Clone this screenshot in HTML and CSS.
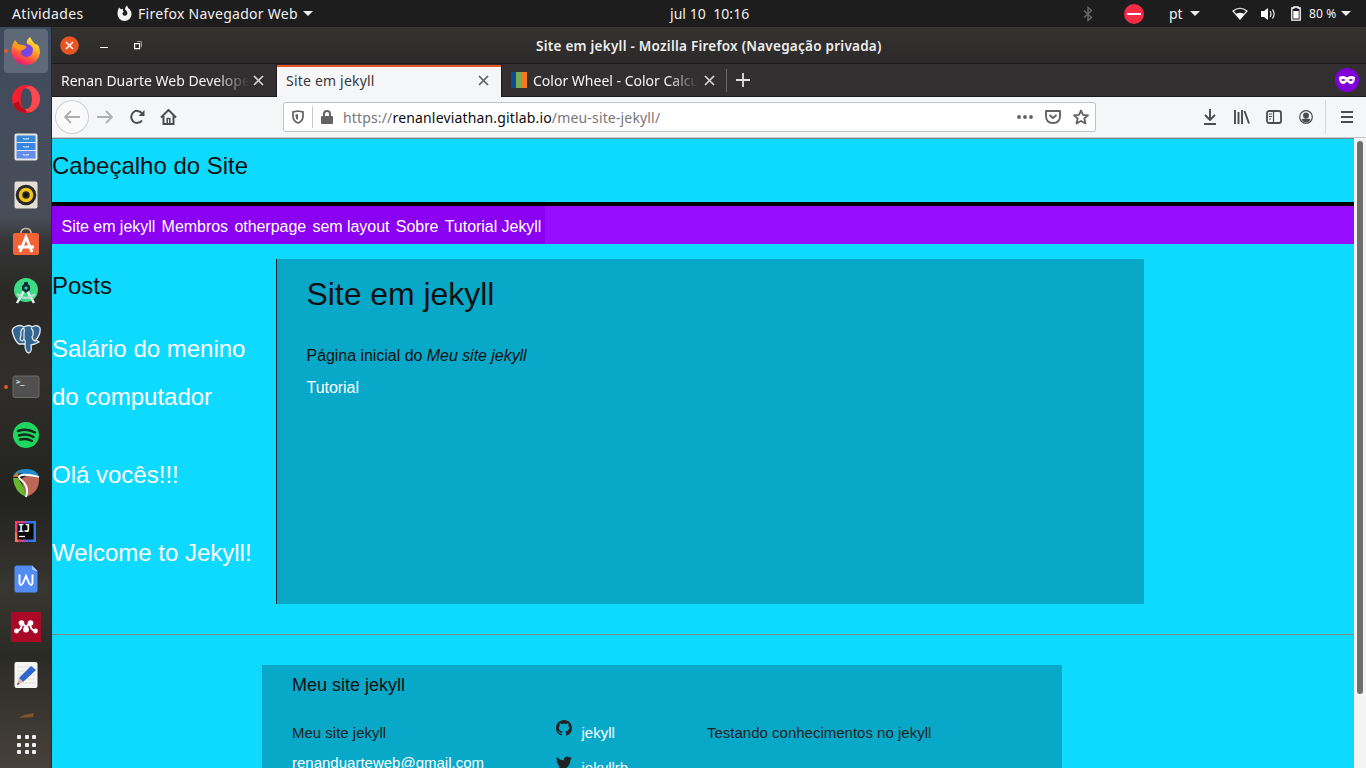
FILE: index.html
```html
<!DOCTYPE html>
<html lang="pt">
<head>
<meta charset="utf-8">
<title>Site em jekyll</title>
<link rel="stylesheet" href="styles.css">
</head>
<body>
<div class="desktop">
  <header class="topbar">
    <span class="activities">Atividades</span>
    <svg class="app-icon" width="17" height="17" viewBox="0 0 17 17"><path d="M8.500 16A7 7 0 0 1 1.500 8.600C1.500 6.200 2.400 4 3 2.600L5 4.200 7 4Q6.500 6 7.800 6.700L6.300 8.200Q6.800 11 9 10.800 11.600 10.500 11.300 7.600 10.700 5.700 9 4.600 9 2 11 .6 11.500 2.800 14 4.500 15.900 7 15.500 9.700A7 7 0 0 1 8.500 16Z" fill="#f2f2f2"/></svg>
    <span class="app-name">Firefox Navegador Web</span>
    <i class="caret"></i>
    <span class="clock">jul 10&nbsp; 10:16</span>
    <div class="status">
      <svg width="10" height="16" viewBox="0 0 10 16"><path d="M1 4.500L8.500 11.500 5 14.500V1.500L8.500 4.500 1 11.500" fill="none" stroke="#686868" stroke-width="1.400"/></svg>
      <svg class="dnd" width="20" height="20" viewBox="0 0 20 20"><circle cx="10" cy="10" r="10" fill="#f32b45"/><path d="M3 10H17" stroke="#fff" stroke-width="2"/></svg>
      <span class="lang">pt</span><i class="caret"></i>
      <svg class="wifi" width="16" height="14" viewBox="0 0 16 14"><path d="M1 4Q8-1.500 15 4L8 12Z" fill="none" stroke="#eee" stroke-width="1.200"/><path d="M4 7Q8 4.500 12 7L8 12Z" fill="#fff"/></svg>
      <svg class="volume" width="16" height="14" viewBox="0 0 16 14"><path d="M1 4H4L8 1V13L4 10H1Z" fill="#fff"/><path d="M10 4Q12 7 10 10M12.500 2.500Q15.800 7 12.500 11.500" fill="none" stroke="#ddd" stroke-width="1.300"/></svg>
      <svg class="battery" width="10" height="15" viewBox="0 0 10 15"><path d="M3 1H7V2H9.200V14.200H.8V2H3Z" fill="none" stroke="#fff" stroke-width="1.300"/><path d="M2.300 5H7.700V12.500H2.300Z" fill="#fff"/></svg>
      <span class="percent">80 %</span><i class="caret"></i>
    </div>
  </header>
  <div class="workspace">
    <nav class="dock">
      <div class="launcher running"><div class="selected"><svg width="30" height="30" viewBox="0 0 30 30"><defs><linearGradient id="fire" x1=".8" y1="0" x2=".3" y2="1"><stop stop-color="#fff44f"/><stop offset=".4" stop-color="#ffab22"/><stop offset=".75" stop-color="#ff4a45"/><stop offset="1" stop-color="#e31587"/></linearGradient></defs><circle cx="15" cy="16" r="8" fill="#7745df"/><path d="M19 1Q15 4 16 8 21 9 22 13 22 21 15 21 9 20 10 15L15 12Q12 12 11 9L7 8 4 4Q-1 12 1 19 5 29 15 29 27 28 29 17 29 8 24 8 21 5 19 1Z" fill="url(#fire)"/><path d="M3 5L8 9H13L16 11 11 14Q6 14 3 11Z" fill="#ff9b18"/></svg></div></div>
      <div class="launcher"><svg width="30" height="30" viewBox="0 0 30 30"><path fill-rule="evenodd" d="M15 1A14 14 0 1 0 15 29A14 14 0 1 0 15 1ZM15 4C23 4 23 26 15 26C8 26 8 4 15 4Z" fill="#f3202f"/><path d="M21 2.300Q29 7 29 15T21 27.700Q17 29 13 25 21 26 21 15 21 4 14 4 18 1 21 2.300Z" fill="#fb4a4f"/><path d="M15 26Q9 25 8 17L2 20Q6 29 15 29Z" fill="#b90c1d"/></svg></div>
      <div class="launcher"><svg width="24" height="28" viewBox="0 0 24 28"><rect x=".5" y=".5" width="23" height="27" rx="2" fill="#e8e6e1"/><path d="M2.500 2.500H21.500V9H2.500Z" fill="#3688db"/><path d="M2.500 10H21.500V17H2.500Z" fill="#3984e5"/><path d="M2.500 18H21.500V25.500H2.500Z" fill="#638deb"/><path d="M9.500 5V6H14.500V5M9.500 13V14H14.500V13M9.500 21V22H14.500V21" fill="none" stroke="#eaf3ff"/></svg></div>
      <div class="launcher"><svg width="24" height="28" viewBox="0 0 24 28"><rect x=".5" y=".5" width="23" height="27" rx="2" fill="#e3dfd4"/><circle cx="12" cy="14" r="10.300" fill="#282828"/><circle cx="12" cy="14" r="5.500" fill="none" stroke="#f5c21b" stroke-width="3.500"/><circle cx="12" cy="14" r="2" fill="#111"/></svg></div>
      <div class="launcher store"><svg width="28" height="29" viewBox="0 0 28 29"><path d="M9 7V5Q10 1.500 14 1.500T19 5V7" fill="none" stroke="#c9b69c" stroke-width="1.600"/><rect x="1" y="6" width="26" height="22" rx="2" fill="#f26336"/><path d="M8 25L14 10 20 25M6 20H22" fill="none" stroke="#fff" stroke-width="2.800"/></svg></div>
      <div class="launcher"><svg width="28" height="30" viewBox="0 0 28 30"><circle cx="14" cy="14" r="12" fill="#3ddc84"/><path d="M5 27L13 13 14 13 22 27" fill="none" stroke="#e4f1ef" stroke-width="2.500"/><path d="M5 18Q14 26 23 18" fill="none" stroke="#bfdbd7" stroke-width="2"/><path d="M12 6H16V8L18 10V14L14 17 10 14V10L12 8Z" fill="#073042"/><circle cx="14" cy="12" r="1.600" fill="#3ddc84"/></svg></div>
      <div class="launcher"><svg width="30" height="30" viewBox="0 0 30 30"><path d="M4 3Q9 0 13 3 18 0 21 3 27 0 29 4 30 10 25 16L28 18 24 20 20 21Q21 28 18 29 14 29 14 20L8 20Q4 17 2 10 0 5 4 3Z" fill="#336791" stroke="#e9edf1" stroke-width="1.300"/><path d="M12 4Q9 7 10 11L9 15Q11 19 13 15V9Q14 4 12 4M20 4Q24 8 21 13 22 17 25 17M14 20Q15 15 12 16" fill="none" stroke="#e9edf1" stroke-width="1.200"/></svg></div>
      <div class="launcher running"><svg width="28" height="24" viewBox="0 0 28 24"><rect x="1" y="1" width="26" height="21.500" rx="2" fill="#505050" stroke="#6b6b6b"/><text class="prompt" x="4" y="9">&gt;_</text></svg></div>
      <div class="launcher"><svg width="28" height="28" viewBox="0 0 28 28"><circle cx="14" cy="14" r="13" fill="#1ed760"/><path d="M6 10Q15 6.800 23 11.500M7 14.500Q15 12 21.500 16M8 18.500Q15 17 20 20" fill="none" stroke="#15291c" stroke-width="2.400" stroke-linecap="round"/></svg></div>
      <div class="launcher"><svg width="28" height="30" viewBox="0 0 28 30"><path d="M1 9Q3 1 14 1T27 9L18 8 8 5Z" fill="#218dcc"/><path d="M1 10L6 10 15 25 14 29Q2 24 1 10Z" fill="#63b92f"/><path d="M9 11L16 7 27 10Q28 24 14 29Z" fill="#bd6757"/><path d="M1 9L5 4 7 9Z" fill="#c27b32"/><path d="M14 29Q18 18 8 11 5 8 10 7T27 9" fill="none" stroke="#fff" stroke-width="1.800"/></svg></div>
      <div class="launcher"><svg width="23" height="23" viewBox="0 0 23 23"><defs><linearGradient id="idea" x2="1"><stop stop-color="#ff3b59"/><stop offset=".35" stop-color="#c74589"/><stop offset=".65" stop-color="#366cf0"/><stop offset="1" stop-color="#327fe0"/></linearGradient></defs><path d="M1 1H22V22H1Z" fill="url(#idea)"/><path d="M1 11L4 15V22H1Z" fill="#ef7952"/><path d="M3.500 3.500H19.500V19.500H3.500Z" fill="#080808"/><text class="idea-label" x="4" y="12">IJ</text><path d="M5 16.500H11" stroke="#fff" stroke-width="1.300"/></svg></div>
      <div class="launcher"><svg width="24" height="28" viewBox="0 0 24 28"><path d="M2 .5H18L23.500 6V26Q23 27.500 21 27.500H2Q.5 27 .5 25V2Z" fill="#528bf2"/><path d="M18 .5V4Q19 6 23.500 6Z" fill="#a9c4f8"/><path d="M5.500 9.500V18Q6.500 22 9 18L12 11 15 18Q17.500 22 18.500 18V9.500" fill="none" stroke="#fff" stroke-width="1.900"/></svg></div>
      <div class="launcher"><svg width="30" height="30" viewBox="0 0 30 30"><path d="M0 0H30V30H0Z" fill="#a90827"/><path d="M5.500 19Q11 18 11 11L15 15 19 11Q19 18 24.500 19" fill="none" stroke="#fff" stroke-width="2"/><g fill="#fff"><circle cx="10.500" cy="11" r="2.800"/><circle cx="19.500" cy="11" r="2.800"/><circle cx="5.500" cy="19" r="2.400"/><circle cx="15" cy="17.500" r="3"/><circle cx="24.500" cy="19" r="2.400"/></g></svg></div>
      <div class="launcher"><svg width="24" height="28" viewBox="0 0 24 28"><rect x=".5" y="1" width="23" height="26" rx="2" fill="#f5f5f2"/><path d="M3 6H21M3 10H21M3 14H21M3 18H21M3 22H21" stroke="#dedede"/><path d="M17 5L22 9 9 21 5 17Z" fill="#2e65cf"/><path d="M5 17L9 21 3 24Z" fill="#deb59e"/><path d="M3 24L4 21.500 5.500 23Z" fill="#333"/></svg></div>
      <svg class="leaf" width="18" height="6" viewBox="0 0 18 6"><path d="M1 5L6 2 16 0 15 4Z" fill="#805626"/></svg>
      <div class="show-apps"><i></i><i></i><i></i><i></i><i></i><i></i><i></i><i></i><i></i></div>
    </nav>
    <main class="browser">
      <div class="titlebar">
        <div class="window-buttons"><svg width="19" height="19" viewBox="0 0 19 19"><circle cx="9.500" cy="9.500" r="9.300" fill="#e95420"/><path d="M6 6L13 13M13 6L6 13" stroke="#fff" stroke-width="1.500"/></svg><i class="minimize"></i><svg width="9" height="9" viewBox="0 0 9 9"><path d="M.6 2.600H5.600V7.600H.6Z" fill="none" stroke="#fff" stroke-width="1.200"/><path d="M3 .5H7.500V6" fill="none" stroke="#999"/></svg></div>
        <span class="window-title">Site em jekyll - Mozilla Firefox (Navegação privada)</span>
      </div>
      <div class="tabs">
        <div class="tab"><span class="tab-label fade first">Renan Duarte Web Developer</span><svg class="close" width="11" height="11" viewBox="0 0 11 11"><path d="M1 1L10 10M10 1L1 10" stroke="currentColor" stroke-width="1.700"/></svg></div>
        <div class="tab active"><span class="tab-label">Site em jekyll</span><svg class="close" width="11" height="11" viewBox="0 0 11 11"><path d="M1 1L10 10M10 1L1 10" stroke="currentColor" stroke-width="1.700"/></svg></div>
        <div class="tab last"><svg class="favicon" width="16" height="16" viewBox="0 0 16 16"><path d="M0 0H5V16H0Z" fill="#0a4b91"/><path d="M5 0H11V16H5Z" fill="#77ad52"/><path d="M11 0H16V16H11Z" fill="#f17b21"/></svg><span class="tab-label fade third">Color Wheel - Color Calculator</span><svg class="close" width="11" height="11" viewBox="0 0 11 11"><path d="M1 1L10 10M10 1L1 10" stroke="currentColor" stroke-width="1.700"/></svg></div>
        <svg class="new-tab" width="14" height="14" viewBox="0 0 14 14"><path d="M0 7H14M7 0V14" stroke="#e2e2e2" stroke-width="1.800"/></svg>
        <svg class="private" width="24" height="24" viewBox="0 0 24 24"><circle cx="12" cy="12" r="12" fill="#8000d7"/><path fill-rule="evenodd" d="M4 9Q8 7 12 9.500 16 7 20 9 20 16 16 16 14 16 12 13.500 10 16 8 16 4 16 4 9ZM6 12Q8 14 10.500 12 8 10 6 12ZM13.500 12Q16 14 18 12 16 10 13.500 12Z" fill="#fff"/></svg>
      </div>
      <div class="toolbar">
        <span class="back"><svg width="16" height="14" viewBox="0 0 16 14"><path d="M16 7H1M7 1L1 7L7 13" fill="none" stroke="#b0b0b3" stroke-width="1.800"/></svg></span>
        <svg class="forward" width="16" height="14" viewBox="0 0 16 14"><path d="M0 7H15M9 1L15 7L9 13" fill="none" stroke="#b0b0b3" stroke-width="1.800"/></svg>
        <svg class="reload" width="16" height="16" viewBox="0 0 16 16"><path d="M12.800 4A6 6 0 1 0 13 11.500" fill="none" stroke="#4c4c4f" stroke-width="2"/><path d="M15.500 1V7H9.500Z" fill="#4c4c4f"/></svg>
        <svg class="home" width="17" height="16" viewBox="0 0 17 16"><path d="M1 8.500L8.500 1 16 8.500M3.500 7V15H13.500V7" fill="none" stroke="#4c4c4f" stroke-width="2"/><path d="M7.200 15V9.500H9.800V15" fill="none" stroke="#4c4c4f" stroke-width="1.500"/></svg>
        <div class="address">
          <svg width="12" height="14" viewBox="0 0 12 14"><path d="M6 1L11 2V6Q11 11 6 13 1 11 1 6V2Z" fill="none" stroke="#626265" stroke-width="1.700"/><path d="M6 4V10Q3.500 9 3.500 6V4.500Z" fill="#626265"/></svg>
          <i class="address-divider"></i>
          <svg width="12" height="14" viewBox="0 0 12 14"><path d="M3 7V4Q3 1 6 1T9 4V7" fill="none" stroke="#626265" stroke-width="2"/><rect y="6" width="12" height="8" rx="1" fill="#626265"/></svg>
          <span class="url">https://<b>renanleviathan.gitlab.io</b>/meu-site-jekyll/</span>
          <svg class="more" width="16" height="4" viewBox="0 0 16 4"><g fill="#626265"><circle cx="2" cy="2" r="1.900"/><circle cx="8" cy="2" r="1.900"/><circle cx="14" cy="2" r="1.900"/></g></svg>
          <svg class="pocket" width="16" height="14" viewBox="0 0 16 14"><path d="M1 1H15V6Q15 13 8 13T1 6Z" fill="none" stroke="#626265" stroke-width="1.900" stroke-linejoin="round"/><path d="M4.500 5L8 8 11.500 5" fill="none" stroke="#626265" stroke-width="1.900"/></svg>
          <svg class="star" width="16" height="16" viewBox="0 0 16 16"><path d="M8 1.500L10 5.800 15 6.300 11.300 9.500 12.500 14.500 8 12 3.500 14.500 4.700 9.500 1 6.300 6 5.800Z" fill="none" stroke="#626265" stroke-width="1.800" stroke-linejoin="round"/></svg>
        </div>
        <div class="tools">
          <svg width="14" height="16" viewBox="0 0 14 16"><path d="M7 0V11M2 6L7 11L12 6M1 15H13" fill="none" stroke="#4c4c4f" stroke-width="1.900"/></svg>
          <svg width="16" height="14" viewBox="0 0 16 14"><path d="M1 0V14M4.500 2V14M8 0V14M10.500 1L15 13.500" stroke="#4c4c4f" stroke-width="1.900"/></svg>
          <svg width="16" height="14" viewBox="0 0 16 14"><rect x="1" y="1" width="14" height="12" rx="2" fill="none" stroke="#4c4c4f" stroke-width="1.800"/><path d="M7.500 1V13M3 4H6M3 6.500H6M3 9H5" stroke="#4c4c4f" stroke-width="1.200"/></svg>
          <svg width="14" height="14" viewBox="0 0 14 14"><circle cx="7" cy="7" r="6.300" fill="none" stroke="#4c4c4f" stroke-width="1.200"/><circle cx="7" cy="5.500" r="3" fill="#4c4c4f"/><path d="M2.500 9Q7 8 11.500 9 10 12.500 7 12.500T2.500 9Z" fill="#4c4c4f"/></svg>
        </div>
        <span class="menu"><svg width="12" height="12" viewBox="0 0 12 12"><path d="M0 1H12M0 6H12M0 11H12" stroke="#4c4c4f" stroke-width="1.800"/></svg></span>
      </div>
      <div class="viewport">
        <div class="page">
          <header class="site-header">Cabeçalho do Site</header>
          <nav class="site-nav"><div class="links"><a>Site em jekyll</a><a>Membros</a><a>otherpage</a><a>sem layout</a><a>Sobre</a><a>Tutorial Jekyll</a></div></nav>
          <div class="columns">
            <aside class="posts"><h2>Posts</h2><a>Salário do menino<br>do computador</a><a>Olá vocês!!!</a><a>Welcome to Jekyll!</a></aside>
            <article class="article"><h1>Site em jekyll</h1><p>Página inicial do <em>Meu site jekyll</em></p><p><a>Tutorial</a></p></article>
          </div>
          <footer class="site-footer"><div class="footer-box"><h3>Meu site jekyll</h3><div class="footer-columns">
            <div class="contact">Meu site jekyll<br><a>renanduarteweb@gmail.com</a></div>
            <div class="social">
              <div><svg width="16" height="16" viewBox="0 0 16 16"><path fill="#222" d="M8 0C3.580 0 0 3.580 0 8c0 3.540 2.290 6.530 5.470 7.590.4.07.55-.17.55-.38 0-.19-.01-.82-.01-1.490-2.010.37-2.530-.49-2.690-.94-.09-.23-.48-.94-.82-1.130-.28-.15-.68-.52-.01-.53.63-.01 1.080.58 1.230.82.72 1.210 1.870.87 2.330.66.07-.52.28-.87.51-1.070-1.780-.2-3.640-.89-3.640-3.950 0-.87.31-1.590.82-2.150-.08-.2-.36-1.020.08-2.120 0 0 .67-.21 2.200.82.64-.18 1.320-.27 2-.27s1.360.09 2 .27c1.530-1.040 2.200-.82 2.200-.82.44 1.100.16 1.920.08 2.120.51.56.82 1.270.82 2.150 0 3.070-1.870 3.750-3.650 3.950.29.25.54.73.54 1.480 0 1.070-.01 1.930-.01 2.200 0 .21.15.46.55.38A8.010 8.010 0 0 0 16 8c0-4.420-3.580-8-8-8z"/></svg><a>jekyll</a></div>
              <div><svg width="16" height="16" viewBox="0 0 24 24"><path fill="#222" d="M23.953 4.570a10 10 0 0 1-2.825.775 4.958 4.958 0 0 0 2.163-2.723c-.951.555-2.005.959-3.127 1.184a4.920 4.920 0 0 0-8.384 4.482C7.690 8.095 4.067 6.130 1.640 3.162a4.822 4.822 0 0 0-.666 2.475c0 1.710.87 3.213 2.188 4.096a4.904 4.904 0 0 1-2.228-.616v.06a4.923 4.923 0 0 0 3.946 4.827 4.996 4.996 0 0 1-2.212.085 4.936 4.936 0 0 0 4.604 3.417 9.867 9.867 0 0 1-6.102 2.105c-.39 0-.779-.023-1.170-.067a13.995 13.995 0 0 0 7.557 2.209c9.053 0 13.998-7.496 13.998-13.985 0-.21 0-.42-.015-.63A9.935 9.935 0 0 0 24 4.590z"/></svg><a>jekyllrb</a></div>
            </div>
            <div class="about">Testando conhecimentos no jekyll</div>
          </div></div></footer>
        </div>
        <div class="scrollbar"><i></i></div>
      </div>
    </main>
  </div>
</div>
</body>
</html>
```
FILE: styles.css
```css
* { box-sizing: border-box; }
body { margin: 0; overflow: hidden; font: 14px "Noto Sans", sans-serif; }
svg { display: block; flex: none; }
i { display: block; flex: none; }
h1, h2, h3, p { margin: 0; font-weight: 400; }
.desktop { width: 1366px; height: 768px; overflow: hidden; display: flex; flex-direction: column; }

.topbar { height: 27px; flex: none; background: #1d1d1d; color: #f0f0f0; display: flex; align-items: center; padding: 0 15px 0 12px; white-space: nowrap; }
.activities { width: 72px; letter-spacing: .35px; }
.app-icon { margin: 0 5px 0 32px; }
.app-name { width: 160px; letter-spacing: .28px; }
.caret { border: 5px solid transparent; border-top-color: #eee; border-bottom: 0; margin-left: 5px; }
.clock { margin-left: 357px; width: 80px; letter-spacing: .05px; }
.status { margin-left: auto; display: flex; align-items: center; }
.dnd { margin-left: 31px; }
.lang { margin-left: 25px; width: 16px; }
.wifi { margin-left: 32px; }
.volume { margin-left: 12px; }
.battery { margin-left: 15px; }
.percent { margin-left: 8px; width: 27px; font-size: 12px; letter-spacing: .15px; }

.workspace { display: flex; height: 741px; }
.dock { width: 52px; flex: none; border-right: 1px solid #292a2c; background: linear-gradient(#3d4a5d 0, #444c5b 100px, #494d58 190px, #343536 215px, #292824 270px, #302f2b 350px, #22221f 470px, #373631 560px, #2b2b25 630px, #47413b 741px); }
.launcher { height: 48px; display: flex; align-items: center; justify-content: center; position: relative; }
.store { padding-bottom: 3px; }
.running::before { content: ""; position: absolute; left: 4px; top: 22px; width: 4px; height: 4px; border-radius: 50%; background: #e95420; }
.selected { width: 44px; height: 44px; border-radius: 4px; background: #ffffff2b; display: flex; align-items: center; justify-content: center; margin-left: 1px; }
.prompt { font: bold 7px "DejaVu Sans Mono", monospace; fill: #eee; }
.idea-label { font: bold 10px "DejaVu Sans Mono", monospace; fill: #fff; }
.leaf { margin: 14px 0 0 18px; }
.show-apps { width: 19px; margin: 16px 0 0 17px; display: grid; grid-template-columns: repeat(3, 4px); gap: 3.500px; }
.show-apps i { width: 4px; height: 4px; border-radius: 1px; background: #eee; }

.browser { width: 1314px; display: flex; flex-direction: column; }
.titlebar { height: 37px; flex: none; background: linear-gradient(#343330, #2c292a); border-bottom: 1px solid #1d1c1d; display: flex; align-items: center; color: #eee; }
.window-buttons { display: flex; align-items: center; padding-left: 8px; width: 484px; }
.minimize { width: 8px; height: 1px; background: #fff; margin: 5px 26px 0 21px; }
.window-title { font-weight: 600; font-size: 13.500px; white-space: nowrap; letter-spacing: .25px; padding-top: 1px; }

.tabs { height: 33px; flex: none; background: #332f31; border-bottom: 1px solid #1b1a1b; display: flex; align-items: center; color: #f4f4f4; padding-right: 7px; }
.tab { width: 225px; height: 33px; display: flex; align-items: center; padding: 0 12px 0 9px; border-right: 1px solid #1d1b1d; }
.tab.active { width: 224px; height: 32px; background: #f5f6f7; color: #38383d; border-top: 2px solid #e95420; border-right: 0; margin-top: 2px; padding: 0 12px 3px 9px; }
.tab.active .tab-label { letter-spacing: .2px; }
.tab.last { width: 226px; border-right: 0; border-left: 1px solid #1d1b1d; position: relative; }
.tab.last::after { content: ""; position: absolute; right: 0; top: 5px; width: 1px; height: 23px; background: #68676a; }
.tab-label { white-space: nowrap; overflow: hidden; }
.fade { -webkit-mask-image: linear-gradient(90deg, #000 82%, transparent); mask-image: linear-gradient(90deg, #000 82%, transparent); }
.first { width: 188px; }
.third { width: 165px; }
.favicon { margin-right: 6px; }
.close { margin-left: auto; }
.tab .close { color: #d6d6d6; }
.tab.active .close { color: #626265; }
.new-tab { margin-left: 9px; }
.private { margin-left: auto; }

.toolbar { height: 41px; flex: none; background: #f5f6f7; border-bottom: 1px solid #c8c8ca; display: flex; align-items: center; }
.back { width: 34px; height: 34px; border: 1px solid #cfcfd1; border-radius: 50%; margin-left: 3px; background: #fafafa; display: grid; place-items: center; }
.forward { margin-left: 8px; }
.reload { margin-left: 16px; }
.home { margin-left: 15px; }
.address { width: 814px; height: 30px; margin-left: 106px; border: 1px solid #c2c2c5; border-radius: 3px; background: #fff; display: flex; align-items: center; padding: 0 6px 0 8px; }
.address-divider { width: 1px; height: 22px; background: #c9c9cc; margin: 0 8px; }
.url { margin-left: 10px; color: #77777a; white-space: nowrap; letter-spacing: .16px; }
.url b { color: #0c0c0d; font-weight: 400; }
.more { margin-left: auto; }
.pocket { margin-left: 12px; }
.star { margin-left: 12px; }
.tools { display: flex; align-items: center; justify-content: space-between; width: 110px; margin-left: 107px; }
.menu { width: 41px; height: 34px; margin-left: 12px; border-left: 1px solid #d9d9dc; display: flex; align-items: center; padding-left: 15px; }

.viewport { flex: 1; min-height: 0; display: flex; overflow: hidden; }
.page { width: 1302px; background: #0edaff; color: #111; border-top: 1px solid #74898e; font-family: "Liberation Sans", Arial, sans-serif; font-size: 16px; line-height: 32px; }
.page a { color: #fff; }
.site-header { height: 67px; border-bottom: 4px solid #000; font-size: 24px; line-height: 54px; }
.site-nav { height: 38px; background: #970dff; }
.links { width: 493px; height: 38px; line-height: 41px; background: #8b00f2; display: flex; gap: 6.400px; padding-left: 9.500px; white-space: nowrap; letter-spacing: -.04px; }
.columns { display: flex; padding-top: 15px; height: 390px; }
.posts { width: 224px; font-size: 24px; line-height: 48px; padding-top: 3px; display: flex; flex-direction: column; white-space: nowrap; }
.posts h2 { font-size: 24px; margin-bottom: 15px; }
.posts a { margin-bottom: 30px; }
.article { width: 868px; height: 345px; background: #08a8c8; border-left: 1px solid #222; padding: 14px 29.500px; }
.article h1 { font-size: 32px; line-height: 42px; margin-bottom: 25px; letter-spacing: -.05px; }
.article p { letter-spacing: -.04px; }
.site-footer { border-top: 1px solid #778b8d; padding: 30px 0 0 210px; }
.footer-box { width: 800px; height: 150px; background: #08a8c8; padding: 5px 30px; color: #222; }
.footer-box h3 { color: #111; font-size: 18px; line-height: 30px; margin-bottom: 18px; }
.footer-columns { display: flex; font-size: 15px; line-height: 30px; }
.contact { width: 264px; }
.social { width: 151px; padding-top: 2px; }
.social div { height: 34.500px; display: flex; }
.social a { margin: -2px 0 0 9.500px; }
.scrollbar { width: 12px; background: #f4f4f4; padding: 3px; }
.scrollbar i { width: 6px; height: 553px; border-radius: 3px; background: #6e6e6e; }
```
